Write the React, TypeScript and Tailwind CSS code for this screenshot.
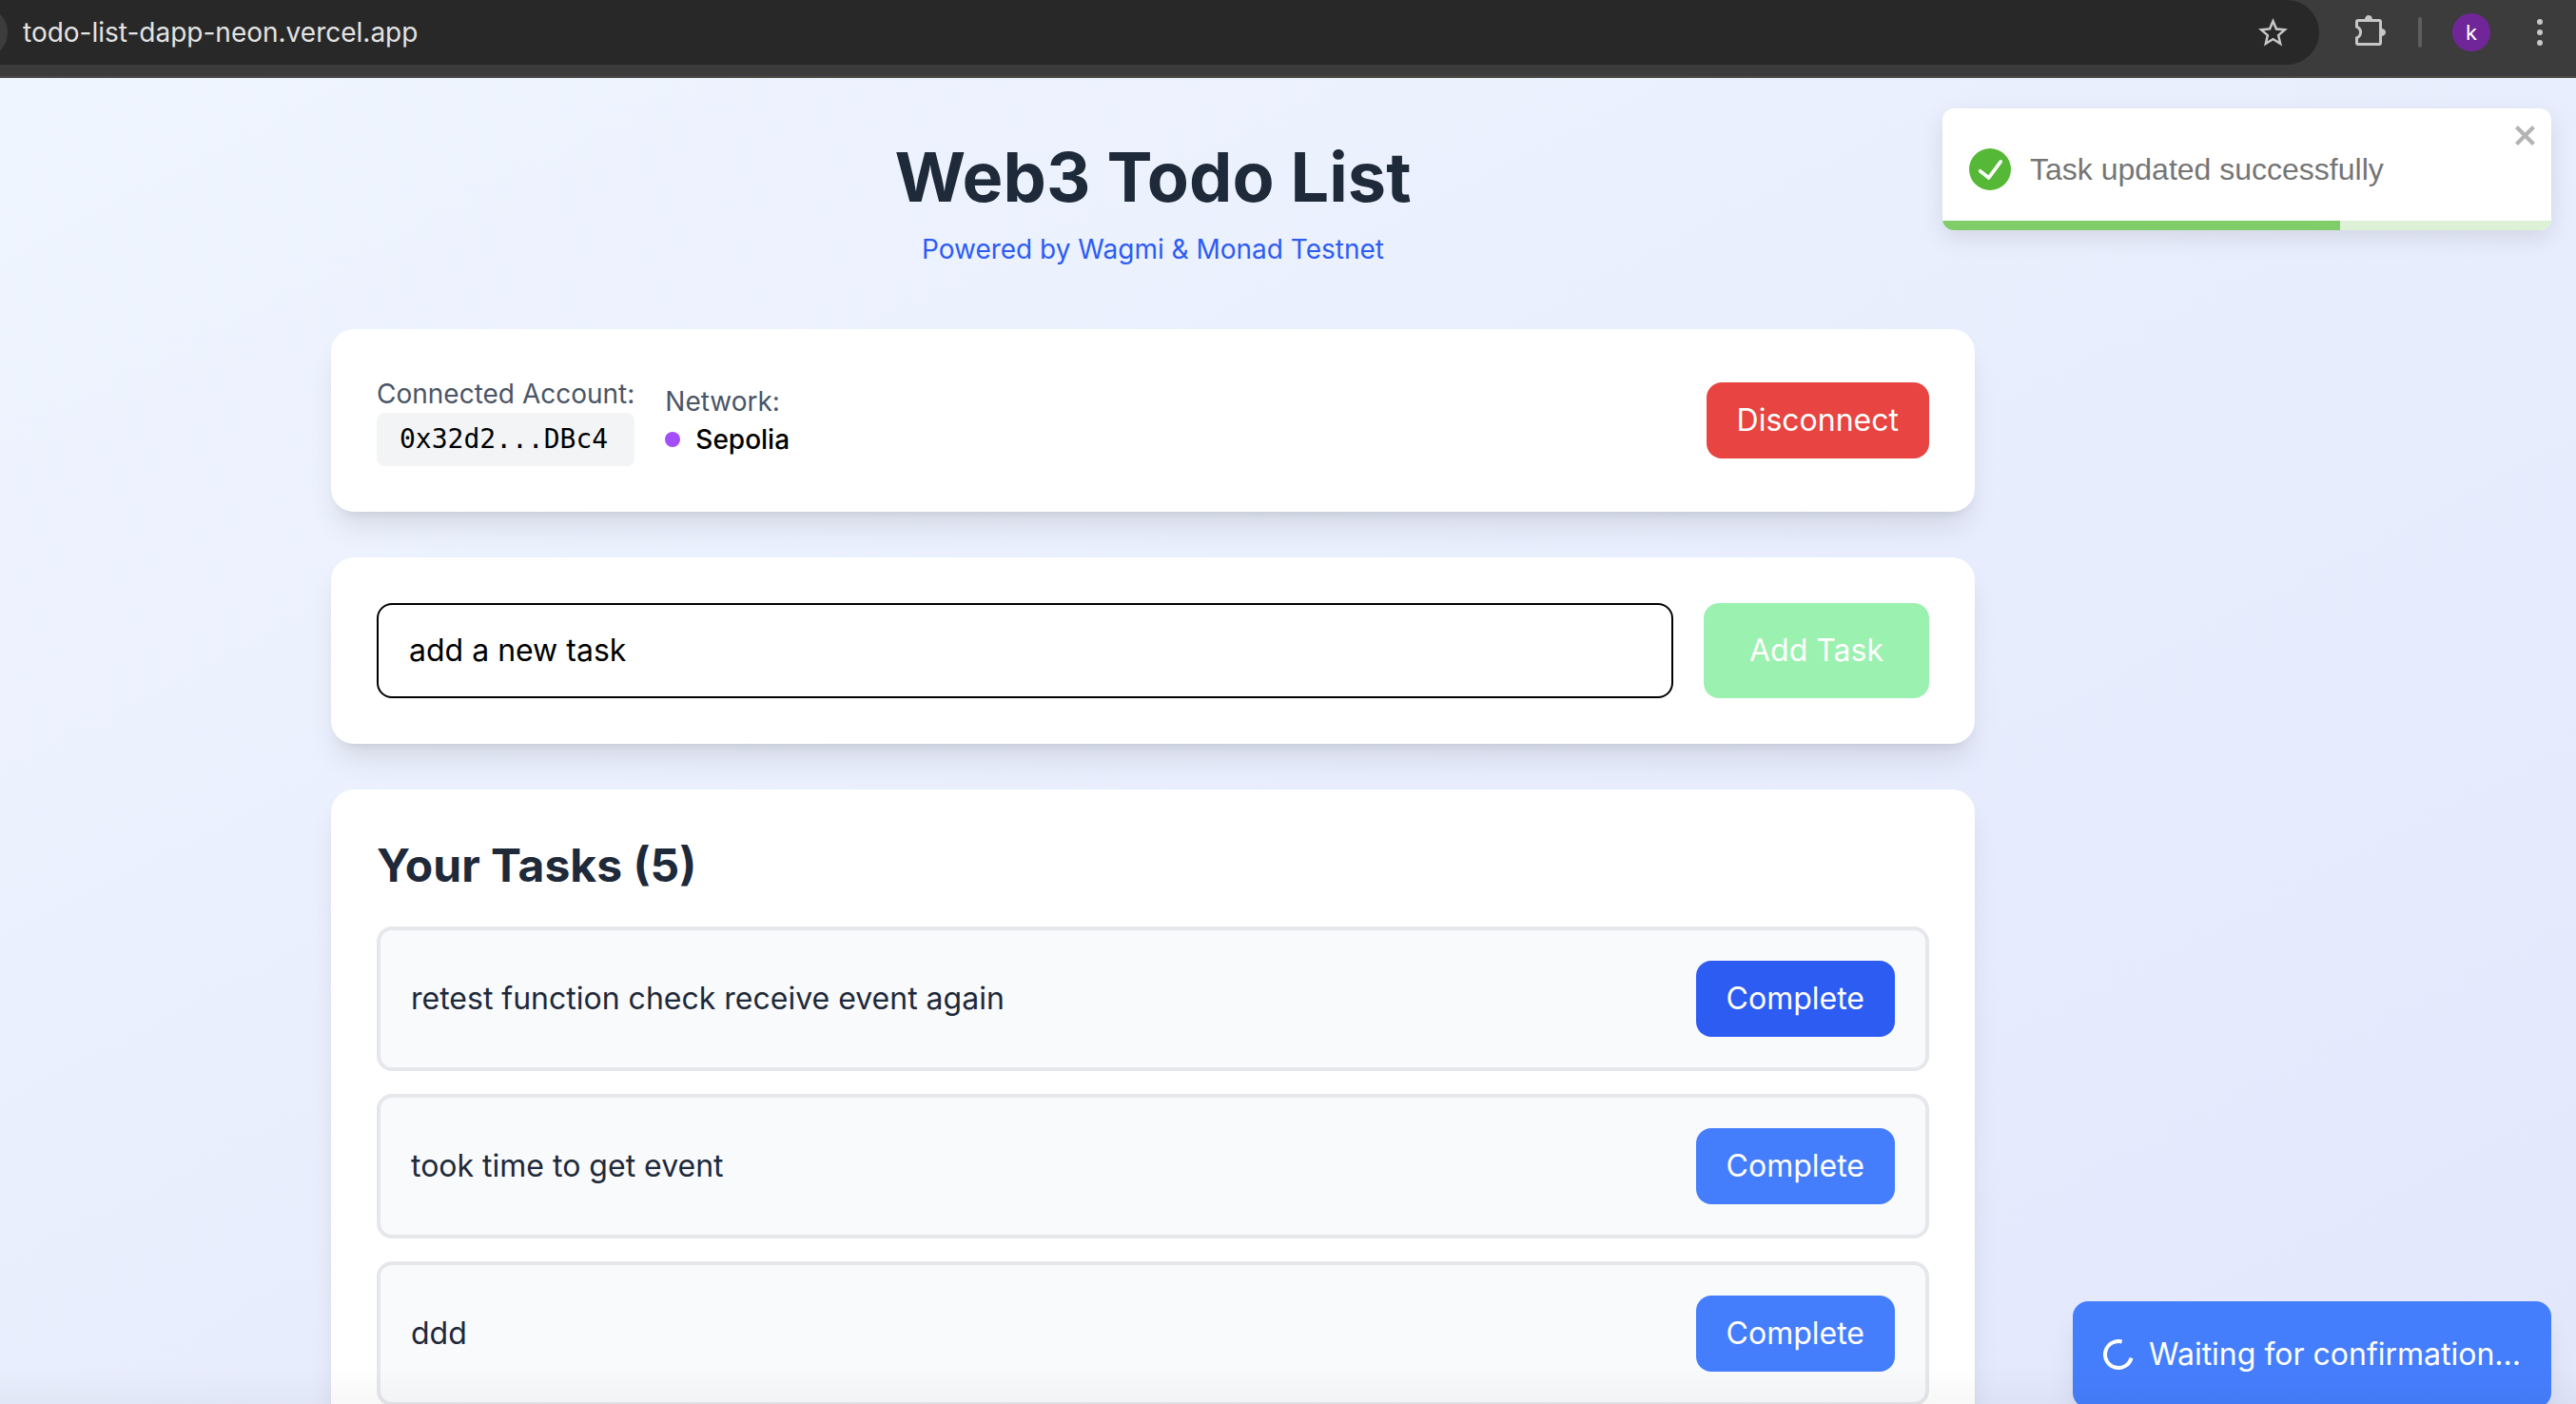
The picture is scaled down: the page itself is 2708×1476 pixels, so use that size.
import React from "react";

const tasks = [
  { id: 1, title: "retest function check receive event again", active: true },
  { id: 2, title: "took time to get event", active: false },
  { id: 3, title: "ddd", active: false },
];

function StarIcon() {
  return (
    <svg viewBox="0 0 24 24" className="size-[37px]" fill="currentColor" aria-hidden="true">
      <path d="M22 9.24l-7.19-.62L12 2 9.19 8.63 2 9.24l5.46 4.73L5.82 21 12 17.27 18.18 21l-1.63-7.03L22 9.24zM12 15.4l-3.76 2.27 1-4.28-3.32-2.88 4.38-.38L12 6.1l1.71 4.04 4.38.38-3.32 2.88 1 4.28L12 15.4z" />
    </svg>
  );
}

function ExtensionsIcon() {
  return (
    <svg viewBox="0 0 32 32" className="size-8" fill="currentColor" aria-hidden="true">
      <path
        d="M1.5 7Q1.5 5.5 3 5.5H25Q26.5 5.5 26.5 7V29Q26.5 30.5 25 30.5H3Q1.5 30.5 1.5 29V23.8A6.2 6.2 0 0 0 1.5 12.2Z"
        fill="none"
        stroke="currentColor"
        strokeWidth="3"
      />
      <path d="M10 4.5a4 4.5 0 0 1 8 0zM27.5 14a4.5 4 0 0 1 0 8z" />
    </svg>
  );
}

function BrowserBar() {
  return (
    <header className="flex h-[82px] shrink-0 items-start border-b-2 border-[#4a4a46] bg-[#3c3c3c] pr-8 font-['Inter',sans-serif] text-[#c7c7c7]">
      <div className="flex h-[68px] flex-1 items-center overflow-hidden rounded-r-full bg-[#282828] pr-[30px]">
        <span className="-ml-12 size-14 shrink-0 rounded-full bg-[#3c3c3c]" />
        <input
          aria-label="Address"
          defaultValue="todo-list-dapp-neon.vercel.app"
          className="ml-4 min-w-0 flex-1 bg-transparent text-[28px] leading-10 text-[#e3e3e3] outline-none"
        />
        <button type="button" aria-label="Bookmark this page">
          <StarIcon />
        </button>
      </div>
      <div className="ml-[38px] flex h-[68px] items-center">
        <button type="button" aria-label="Extensions" className="-mt-1">
          <ExtensionsIcon />
        </button>
        <span className="ml-[34px] h-8 w-1 rounded-full bg-[#5e5e5e]" />
        <button
          type="button"
          aria-label="Profile"
          className="ml-8 flex size-10 items-center justify-center rounded-full bg-[#702699] text-[22px] leading-none text-white"
        >
          k
        </button>
        <button type="button" aria-label="Menu" className="ml-[46px] flex w-3 flex-col items-center gap-[5px]">
          <span className="size-1.5 rounded-full bg-[#c7c7c7]" />
          <span className="size-1.5 rounded-full bg-[#c7c7c7]" />
          <span className="size-1.5 rounded-full bg-[#c7c7c7]" />
        </button>
      </div>
    </header>
  );
}

function Card({ children }: { children: React.ReactNode }) {
  return (
    <section className="rounded-3xl bg-white p-12 shadow-[0_20px_30px_-6px_rgba(0,0,0,0.1),0_8px_12px_-8px_rgba(0,0,0,0.1)]">
      {children}
    </section>
  );
}

function AccountCard() {
  return (
    <Card>
      <div className="flex items-center justify-between">
        <div className="flex items-center gap-8 text-[28px] leading-10">
          <div>
            <p className="text-[#4a5565]">Connected Account:</p>
            <p className="rounded-lg bg-[#f3f4f6] px-6 py-2 font-['DejaVu_Sans_Mono','Liberation_Mono',monospace] text-[28px]">
              0x32d2...DBc4
            </p>
          </div>
          <div>
            <p className="text-[#4a5565]">Network:</p>
            <p className="flex items-center gap-4 font-medium">
              <span className="size-4 rounded-full bg-[#a34dfb]" />
              Sepolia
            </p>
          </div>
        </div>
        <button type="button" className="rounded-2xl bg-[#e84441] px-8 py-4 text-white">
          Disconnect
        </button>
      </div>
    </Card>
  );
}

function AddTaskCard() {
  return (
    <Card>
      <form className="flex gap-8" onSubmit={(event) => event.preventDefault()}>
        <input
          type="text"
          aria-label="New task"
          defaultValue="add a new task"
          className="min-w-0 flex-1 rounded-2xl border-2 border-black bg-white px-8 py-6 text-black outline-none"
        />
        <button type="submit" className="rounded-2xl bg-[#9bf1b0] px-12 text-white">
          Add Task
        </button>
      </form>
    </Card>
  );
}

function TaskList() {
  return (
    <Card>
      <h2 className="mb-8 text-5xl/16 font-bold text-[#1e2939]">Your Tasks (5)</h2>
      <ul className="flex flex-col gap-6">
        {tasks.map((task) => (
          <li
            key={task.id}
            className="flex items-center justify-between rounded-2xl border-4 border-[#e5e7eb] bg-[#f9fafc] p-8 text-[#1e2939]"
          >
            <span>{task.title}</span>
            <button
              type="button"
              className={
                task.active
                  ? "rounded-2xl bg-[#2d5cf3] px-8 py-4 text-white"
                  : "rounded-2xl bg-[#457efd] px-8 py-4 text-white"
              }
            >
              Complete
            </button>
          </li>
        ))}
      </ul>
    </Card>
  );
}

function SuccessToast() {
  return (
    <div
      role="status"
      className="absolute top-8 right-[26px] flex h-32 w-[640px] flex-col overflow-hidden rounded-xl bg-white font-['Liberation_Sans',sans-serif] text-[#757575] shadow-[0_8px_24px_rgba(0,0,0,0.1)]"
    >
      <div className="flex flex-1 items-center gap-5 px-7 pt-2.5">
        <svg viewBox="0 0 24 24" className="size-11 shrink-0" fill="#55b937" aria-hidden="true">
          <path d="M12 0a12 12 0 1012 12A12.014 12.014 0 0012 0zm6.927 8.2l-6.845 9.289a1.011 1.011 0 01-1.43.188l-4.888-3.908a1 1 0 111.25-1.562l4.076 3.261 6.227-8.451a1 1 0 111.61 1.183z" />
        </svg>
        <p>Task updated successfully</p>
      </div>
      <button type="button" aria-label="Close" className="absolute top-3 right-3">
        <svg viewBox="0 0 14 16" className="h-8 w-7" fill="#b3b3b3" aria-hidden="true">
          <path
            fillRule="evenodd"
            d="M7.71 8.23l3.75 3.75-1.48 1.48-3.75-3.75-3.75 3.75L1 11.98l3.75-3.75L1 4.48 2.48 3l3.75 3.75L9.98 3l1.48 1.48-3.75 3.75z"
          />
        </svg>
      </button>
      <div className="h-2.5 bg-[#ddf1d7]">
        <div className="h-full w-[65.3%] bg-[#7fcc68]" />
      </div>
    </div>
  );
}

function PendingToast() {
  return (
    <div
      role="status"
      className="absolute right-[26px] -bottom-1 flex items-center gap-4 rounded-2xl bg-[#457efd] p-8 text-white shadow-[0_20px_30px_-6px_rgba(0,0,0,0.1),0_8px_12px_-8px_rgba(0,0,0,0.1)]"
    >
      <svg viewBox="0 0 32 32" className="size-8" fill="none" aria-hidden="true">
        <path d="M19.62 2.48A14 14 0 1 0 29.52 19.62" stroke="white" strokeWidth="4" />
      </svg>
      <span>Waiting for confirmation...</span>
    </div>
  );
}

export default function App() {
  return (
    <div className="flex h-screen flex-col overflow-hidden">
      <BrowserBar />
      <div className="relative min-h-0 flex-1 overflow-hidden bg-linear-to-br from-[#eff5fe] to-[#e2e7fc] font-['Inter',sans-serif] text-[32px] leading-12 text-black">
        <div className="pr-[284px]">
          <main className="mx-auto flex max-w-[1792px] flex-col gap-12 px-8 py-16">
            <div className="mb-4 text-center">
              <h1 className="text-7xl/20 font-bold text-[#1e2939]">Web3 Todo List</h1>
              <p className="mt-4 text-[28px] leading-10 text-[#2d5cf3]">Powered by Wagmi &amp; Monad Testnet</p>
            </div>
            <AccountCard />
            <AddTaskCard />
            <TaskList />
          </main>
        </div>
        <SuccessToast />
        <PendingToast />
        <div className="pointer-events-none absolute inset-x-0 bottom-0 h-10 bg-linear-to-b from-transparent to-black/3" />
      </div>
    </div>
  );
}
